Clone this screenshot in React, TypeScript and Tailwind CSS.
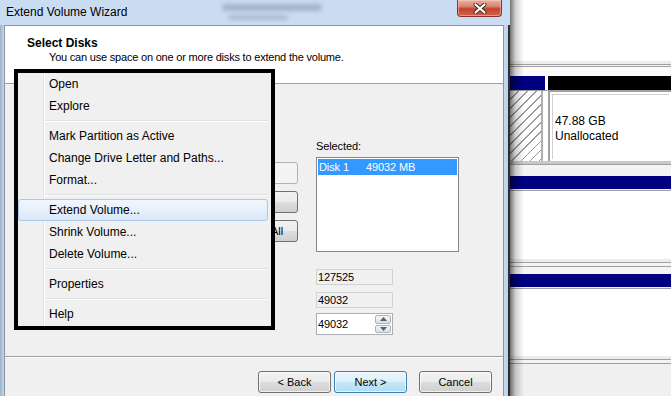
import React from "react";

const winBtn =
  "h-[22px] w-[73px] rounded-[3px] border flex items-center justify-center text-[11px] text-black shadow-[inset_0_0_0_1px_rgba(255,255,255,0.7)]";
const normalBg =
  "border-[#707070] bg-[linear-gradient(to_bottom,#f2f2f2_0%,#ebebeb_50%,#dddddd_50%,#cfcfcf_100%)]";

function MenuItem({ label, active }: { label: string; active?: boolean }) {
  return (
    <div
      className={
        "relative z-10 h-[22px] flex items-center text-[12px] text-black " +
        (active
          ? "mr-[3px] rounded-[3px] border border-[#a8c8ec] bg-[linear-gradient(to_bottom,#f1f7fe,#dbe8f8)] pl-[30px]"
          : "pl-[31px]")
      }
    >
      {label}
    </div>
  );
}

function MenuSep() {
  return (
    <div className="relative z-10 h-[8px] flex flex-col justify-center ml-[27px] mr-[3px]">
      <div className="h-px bg-[#e0e0e0]" />
      <div className="h-px bg-white" />
    </div>
  );
}

export default function App() {
  return (
    <div className="relative w-[671px] h-[396px] overflow-hidden bg-white font-['Liberation_Sans',Arial,sans-serif]">
      {/* Background: Disk Management */}
      <div className="absolute inset-0 flex flex-col bg-white">
        <div className="h-[61px] bg-white" />
        <div className="h-[3px] bg-[#ececec]" />
        <div className="h-px bg-[#a0a0a0]" />
        <div className="h-px bg-[#f4f4f4]" />
        <div className="h-px bg-[#a0a0a0]" />
        <div className="h-[9px] bg-[#fafafa]" />
        <div className="flex h-[14px]">
          <div className="w-[545px] bg-[#000080]" />
          <div className="w-[3px] bg-white" />
          <div className="flex-1 bg-black" />
        </div>
        <div className="h-px bg-[#a0a0a0]" />
        <div className="flex h-[70px] bg-white">
          <div className="w-[510px]" />
          <div className="w-[33px] border-r-2 border-[#b0b0b0] bg-[repeating-linear-gradient(135deg,#ffffff_0px,#ffffff_5.4px,#9a9a9a_5.4px,#9a9a9a_6.4px)]" />
          <div className="w-[5px]" />
          <div className="flex-1 border-l-2 border-t border-[#a0a0a0] p-[2px]">
            <div className="h-full border-l border-t border-[#d0d0d0] pl-[2px] pt-[19px] text-[12px] leading-[15px] text-black">
              <div>47.88 GB</div>
              <div>Unallocated</div>
            </div>
          </div>
        </div>
        <div className="h-[3px] bg-[#c8c8c8]" />
        <div className="h-px bg-[#a0a0a0]" />
        <div className="h-[11px] bg-[#f4f4f4]" />
        <div className="h-[13px] bg-[#000080]" />
        <div className="h-px bg-[#f0f0f0]" />
        <div className="h-px bg-[#a0a0a0]" />
        <div className="h-[68px] bg-white" />
        <div className="h-[3px] bg-[#ececec]" />
        <div className="h-px bg-[#a0a0a0]" />
        <div className="h-[3px] bg-[#f4f4f4]" />
        <div className="h-px bg-[#a0a0a0]" />
        <div className="h-[7px] bg-[#f4f4f4]" />
        <div className="h-[13px] bg-[#000080]" />
        <div className="h-px bg-[#f0f0f0]" />
        <div className="h-px bg-[#a0a0a0]" />
        <div className="h-[67px] bg-white" />
        <div className="h-[3px] bg-[#ececec]" />
        <div className="h-px bg-[#a0a0a0]" />
        <div className="h-[3px] bg-[#f4f4f4]" />
        <div className="h-px bg-[#a0a0a0]" />
        <div className="flex-1 bg-[#f0f0f0]" />
      </div>

      {/* Window shadow */}
      <div className="absolute left-[510px] top-0 h-full w-[14px] bg-[linear-gradient(to_right,rgba(0,0,0,0.55),rgba(0,0,0,0.18)_40%,rgba(0,0,0,0))]" />

      {/* Wizard window */}
      <div className="absolute left-0 top-0 w-[510px] h-[396px] flex flex-col bg-[linear-gradient(to_bottom,#cadcf1,#d6e5f5)]">
        {/* Title bar */}
        <div className="relative h-[25px] flex items-start">
          <div className="pl-[6px] h-[24px] leading-[24px] text-[12px] text-black">Extend Volume Wizard</div>
          <div className="absolute left-[222px] top-[4px] h-[7px] w-[100px] rounded bg-[#8c9aae] blur-[2px] opacity-60" />
          <div className="absolute left-[228px] top-[15px] h-[5px] w-[60px] rounded bg-[#8c9aae] blur-[2px] opacity-50" />
          <div className="ml-auto mr-[8px] h-[17px] w-[45px] rounded-b-[4px] border border-t-0 border-[#8a3428] bg-[linear-gradient(to_bottom,#eab0a2_0%,#d98470_40%,#c4432c_55%,#d2654c_100%)] flex items-center justify-center shadow-[inset_0_0_0_1px_rgba(255,220,210,0.45)]">
            <svg width="14" height="11" viewBox="0 0 14 11">
              <path d="M2.5 1.5 L11.5 9.5 M11.5 1.5 L2.5 9.5" stroke="#3a2a2a" strokeWidth="4" strokeLinecap="round" />
              <path d="M2.5 1.5 L11.5 9.5 M11.5 1.5 L2.5 9.5" stroke="#ffffff" strokeWidth="2.2" strokeLinecap="round" />
            </svg>
          </div>
        </div>
        <div className="flex flex-1">
          <div className="w-[4px] bg-[linear-gradient(to_right,#9fb0c3,#c6d8ec)]" />
          {/* Client */}
          <div className="w-[500px] flex flex-col border-l border-r border-t border-[#8795a5] bg-[#f0f0f0]">
            <div className="h-[58px] bg-white border-b border-[#a0a0a0] pt-[10px]">
              <div className="pl-[22px] text-[12px] leading-[14px] font-bold text-black">Select Disks</div>
              <div className="pl-[44px] mt-[1px] text-[11px] leading-[13px] tracking-[-0.2px] text-black">
                You can use space on one or more disks to extend the volume.
              </div>
            </div>
            {/* Body */}
            <div className="h-[272px] flex pl-[207px] pt-[56px] text-[11px] tracking-[-0.1px] text-black">
              <div className="w-[86px] flex flex-col gap-[7px] mt-[22px]">
                <div className="h-[22px] rounded-[3px] border border-[#adb2b5] bg-[#f4f4f4] flex items-center justify-end pr-[30px] text-[#a0a0a0]">Add &gt;</div>
                <div className={"h-[22px] rounded-[3px] border flex items-center justify-end pr-[28px] " + normalBg}>&lt; Remove</div>
                <div className={"h-[22px] rounded-[3px] border flex items-center justify-end pr-[14px] " + normalBg}>Remove All</div>
              </div>
              <div className="ml-[18px] flex flex-col">
                <div className="h-[12px] leading-[12px]">Selected:</div>
                <div className="mt-[5px] w-[143px] h-[95px] border border-[#828790] bg-white p-[1px]">
                  <div className="h-[16px] bg-[#3399ff] text-white flex items-center">
                    <span className="w-[48px] pl-[1px]">Disk 1</span>
                    <span>49032 MB</span>
                  </div>
                </div>
                <div className="mt-[17px] w-[77px] h-[16px] border border-[#d2d2d2] bg-[#f0f0f0] flex items-center pl-[1px]">127525</div>
                <div className="mt-[7px] w-[77px] h-[16px] border border-[#d2d2d2] bg-[#f0f0f0] flex items-center pl-[1px]">49032</div>
                <div className="mt-[5px] w-[77px] h-[22px] border border-[#abadb3] bg-white flex items-center">
                  <span className="flex-1 pl-[1px]">49032</span>
                  <div className="w-[17px] h-full flex flex-col gap-[1px] py-[1px] pr-[1px]">
                    <div className="flex-1 rounded-[2px] border border-[#a9b4c2] bg-[linear-gradient(to_bottom,#f6f6f6,#dedede)] flex items-center justify-center">
                      <svg width="7" height="4" viewBox="0 0 7 4"><path d="M0 4 L3.5 0 L7 4 Z" fill="#4d6185" /></svg>
                    </div>
                    <div className="flex-1 rounded-[2px] border border-[#a9b4c2] bg-[linear-gradient(to_bottom,#f6f6f6,#dedede)] flex items-center justify-center">
                      <svg width="7" height="4" viewBox="0 0 7 4"><path d="M0 0 L3.5 4 L7 0 Z" fill="#4d6185" /></svg>
                    </div>
                  </div>
                </div>
              </div>
            </div>
            {/* Footer */}
            <div className="flex-1 border-t border-[#a0a0a0]">
              <div className="h-full border-t border-white flex justify-end gap-[3px] pr-[11px] pt-[13px]">
                <div className={winBtn + " " + normalBg}>&lt; Back</div>
                <div className={winBtn + " border-[#3c7fb1] bg-[linear-gradient(to_bottom,#eaf6fd_0%,#d9f0fc_50%,#c4e6f8_50%,#b2dcf3_100%)] mr-[9px]"}>Next &gt;</div>
                <div className={winBtn + " " + normalBg}>Cancel</div>
              </div>
            </div>
          </div>
          <div className="w-[4px] bg-[linear-gradient(to_right,#c6d9ee,#bcd2ea)]" />
          <div className="w-[2px] bg-[#2c2f33]" />
        </div>
      </div>

      {/* Context menu */}
      <div className="absolute left-[14px] top-[69px] w-[261px] h-[261px] border-4 border-black bg-[#f0f0f0]">
        <div className="absolute left-[25px] top-0 h-full w-[2px] flex">
          <div className="w-px bg-[#e2e3e3]" />
          <div className="w-px bg-white" />
        </div>
        <MenuItem label="Open" />
        <MenuItem label="Explore" />
        <MenuSep />
        <MenuItem label="Mark Partition as Active" />
        <MenuItem label="Change Drive Letter and Paths..." />
        <MenuItem label="Format..." />
        <MenuSep />
        <MenuItem label="Extend Volume..." active />
        <MenuItem label="Shrink Volume..." />
        <MenuItem label="Delete Volume..." />
        <MenuSep />
        <MenuItem label="Properties" />
        <MenuSep />
        <MenuItem label="Help" />
      </div>
    </div>
  );
}
